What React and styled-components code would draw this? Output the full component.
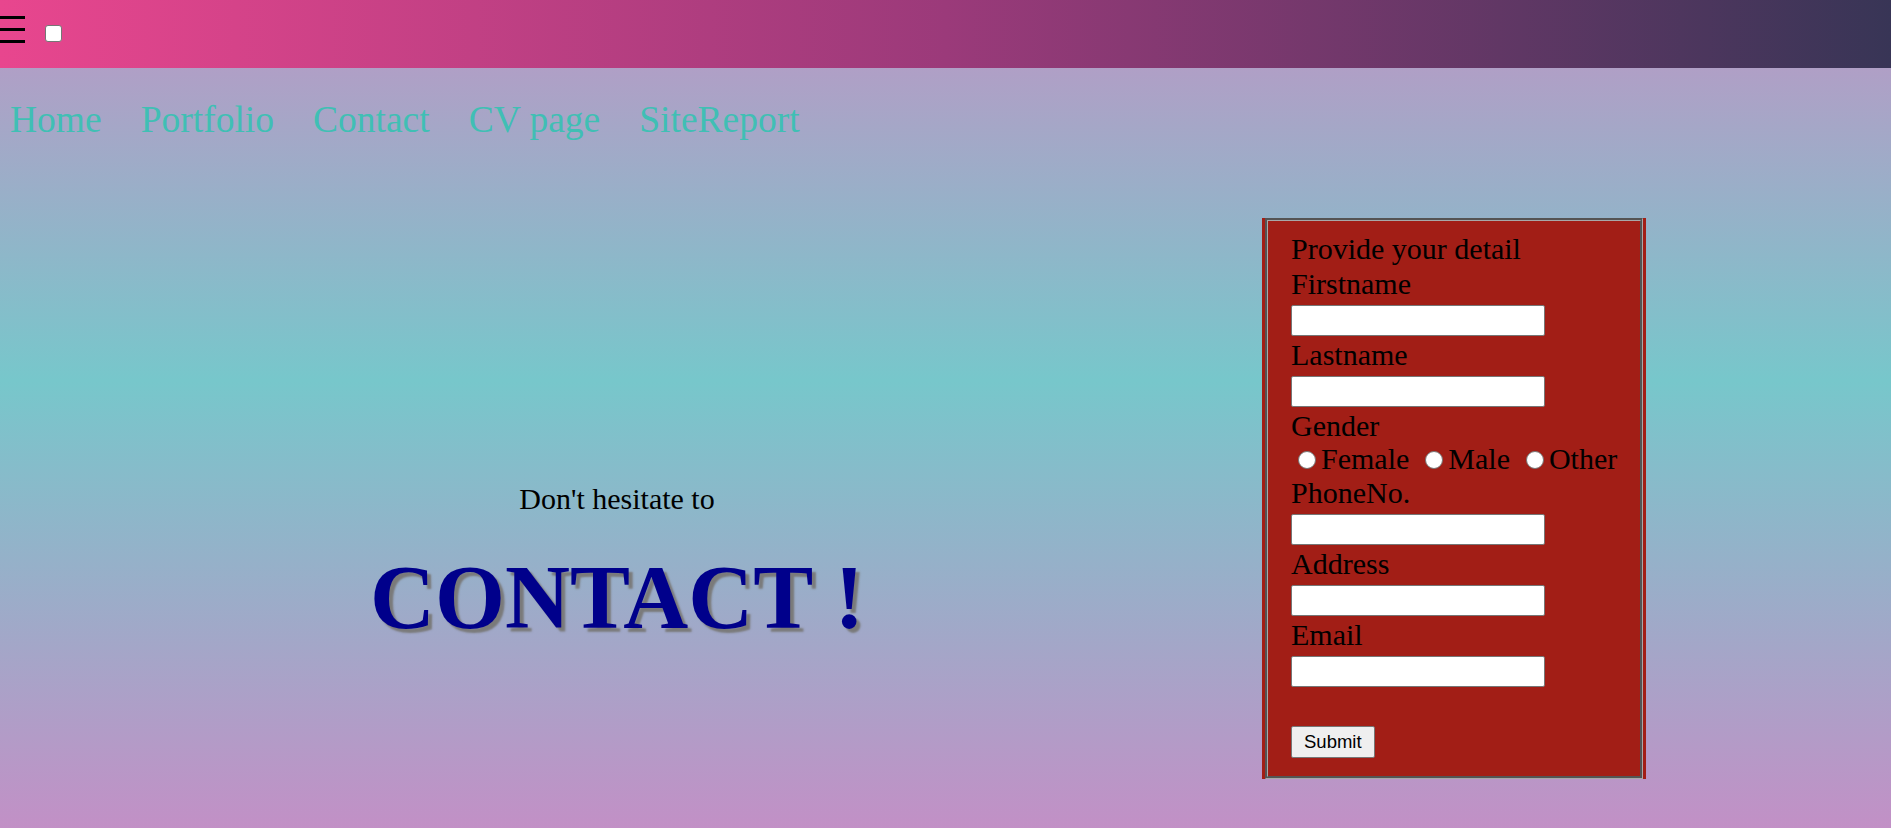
import React from 'react';
import styled, { createGlobalStyle } from 'styled-components';

const links = ['Home', 'Portfolio', 'Contact', 'CV page', 'SiteReport'];
const fields = ['PhoneNo.', 'Address', 'Email'];

const App = () => {
  return (
    <Page>
      <GlobalStyle />
      <TopBar>
        <Burger viewBox="0 0 26 30" aria-hidden="true">
          <rect x="0" y="0" width="25" height="3" />
          <rect x="0" y="12" width="25" height="3" />
          <rect x="0" y="24" width="25" height="3" />
        </Burger>
        <Toggle type="checkbox" />
      </TopBar>

      <NavList>
        {links.map((label) => (
          <li key={label}>
            <NavLink href="#">{label}</NavLink>
          </li>
        ))}
      </NavList>

      <Main>
        <Hero>
          <Lead>Don't hesitate to</Lead>
          <BigTitle>CONTACT !</BigTitle>
        </Hero>

        <FormColumn>
          <FormFrame>
            <Fieldset>
              <Label as="div">Provide your detail</Label>
              <Label>Firstname</Label>
              <TextInput type="text" />
              <Label>Lastname</Label>
              <TextInput type="text" />
              <Label as="div">Gender</Label>
              <RadioRow>
                <Radio type="radio" name="gender" />
                <RadioText>Female</RadioText>
                <Radio type="radio" name="gender" />
                <RadioText>Male</RadioText>
                <Radio type="radio" name="gender" />
                <RadioText $last>Other</RadioText>
              </RadioRow>
              {fields.map((f) => (
                <React.Fragment key={f}>
                  <Label>{f}</Label>
                  <TextInput type="text" />
                </React.Fragment>
              ))}
              <SubmitButton type="button">Submit</SubmitButton>
            </Fieldset>
          </FormFrame>
        </FormColumn>
      </Main>
    </Page>
  );
};

export default App;

const GlobalStyle = createGlobalStyle`
  html, body {
    margin: 0;
    padding: 0;
  }
  body {
    font-family: 'Liberation Serif', 'Times New Roman', serif;
  }
`;

const Page = styled.div`
  min-height: 100vh;
  background: linear-gradient(180deg, #b49ac7 0%, #b09fc6 8%, #77c7cb 46%, #c290c6 100%);
  overflow: hidden;
`;

const TopBar = styled.header`
  height: 68px;
  display: flex;
  align-items: flex-start;
  background: linear-gradient(90deg, #e8468e 0%, #9b3a7a 50%, #383556 100%);
`;

const Burger = styled.svg`
  width: 26px;
  height: 30px;
  margin-top: 16px;
  fill: #000;
`;

const Toggle = styled.input`
  appearance: none;
  box-sizing: border-box;
  width: 17px;
  height: 17px;
  margin: 25px 0 0 19px;
  border: 1px solid #767676;
  border-radius: 3px;
  background: #fff;
`;

const NavList = styled.ul`
  display: flex;
  gap: 39px;
  list-style: none;
  margin: 0;
  padding: 31px 0 0 10px;
  font-size: 37.5px;
  line-height: 42.5px;
`;

const NavLink = styled.a`
  color: #40bfb4;
  text-decoration: none;
`;

const Main = styled.main`
  display: grid;
  grid-template-columns: 1234px 1fr;
  padding-top: 76px;
`;

const Hero = styled.section`
  text-align: center;
  padding-top: 264px;
`;

const Lead = styled.p`
  margin: 0;
  font-size: 30px;
  line-height: 34.5px;
  color: #000;
`;

const BigTitle = styled.h1`
  margin: 30px 0 0;
  font-size: 90px;
  line-height: 103px;
  font-weight: bold;
  color: #00008b;
  text-shadow: 4px 4px 2px #7a7a7a;
`;

const FormColumn = styled.div`
  padding-left: 28px;
`;

const FormFrame = styled.form`
  width: fit-content;
  background: #a21e16;
  padding: 0 3px;
`;

const Fieldset = styled.fieldset`
  margin: 0;
  padding: 10px 23px 18px 23px;
  border: 3px groove #a8a8a8;
  background: #a21e16;
  font-size: 30px;
  color: #000;
`;

const Label = styled.label`
  display: block;
  line-height: 35px;
  white-space: nowrap;
`;

const TextInput = styled.input`
  display: block;
  box-sizing: border-box;
  width: 254px;
  height: 31px;
  margin: 4px 0 1px;
  padding: 1px 3px;
  border: 1px solid #767676;
  border-radius: 2px;
  background: #fff;
  font-size: 17px;
  font-family: 'Liberation Sans', Arial, sans-serif;
`;

const RadioRow = styled.div`
  display: flex;
  align-items: center;
  height: 32px;
  white-space: nowrap;
`;

const Radio = styled.input`
  appearance: none;
  box-sizing: border-box;
  flex: 0 0 auto;
  width: 18px;
  height: 18px;
  margin: 3px 5px 0 7px;
  border: 1.5px solid #767676;
  border-radius: 50%;
  background: #fff;
`;

const RadioText = styled.span`
  margin-right: ${(p) => (p.$last ? '0' : '9px')};
`;

const SubmitButton = styled.button`
  display: block;
  box-sizing: border-box;
  height: 32px;
  margin-top: 39px;
  padding: 0 12px;
  border: 1px solid #767676;
  border-radius: 2px;
  background: #efefef;
  color: #000;
  font-size: 18.5px;
  font-family: 'Liberation Sans', Arial, sans-serif;
`;
